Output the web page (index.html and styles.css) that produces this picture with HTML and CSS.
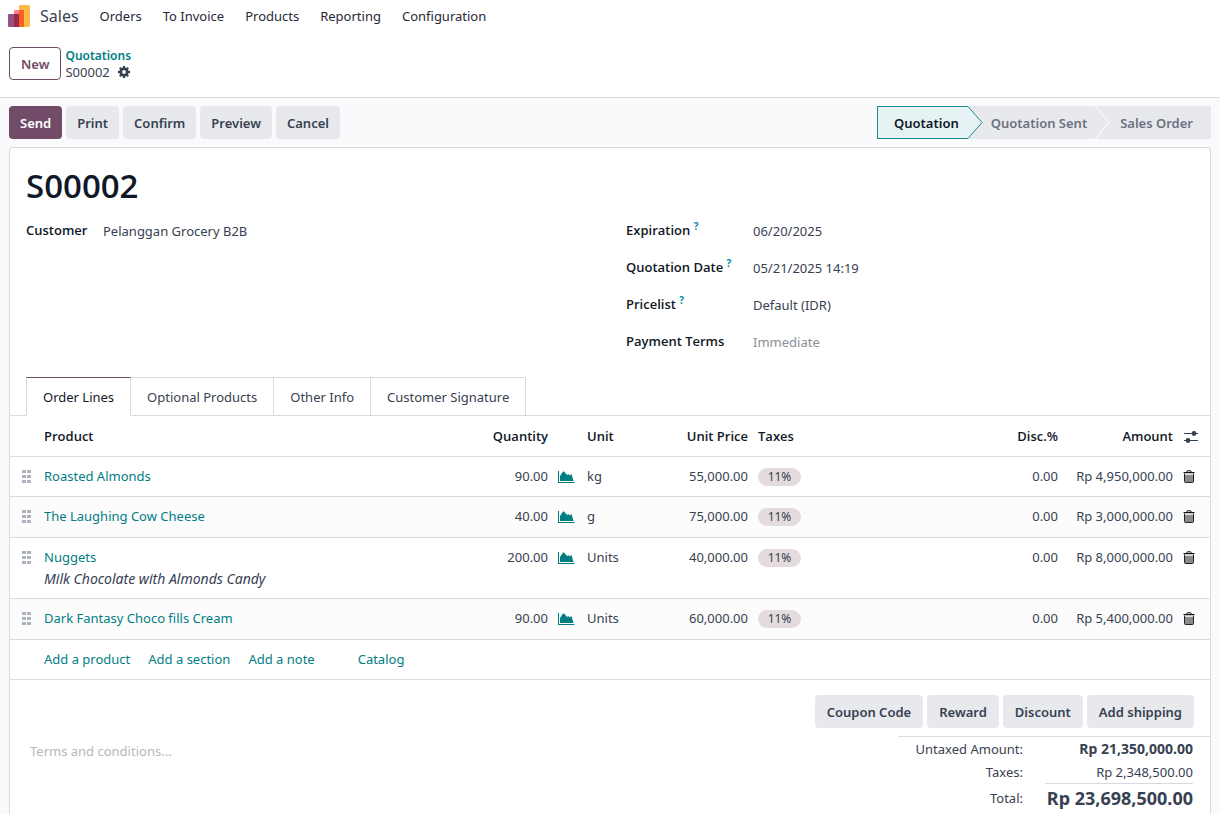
FILE: index.html
```html
<!DOCTYPE html>
<html lang="en">
<head>
<meta charset="UTF-8" />
<meta name="viewport" content="width=device-width, initial-scale=1" />
<title>S00002 - Sales</title>
<link rel="stylesheet" href="styles.css">
</head>
<body>

  <!-- shared icons -->
  <svg class="sprite" aria-hidden="true">
    <symbol id="i-chart" viewBox="0 0 17 14">
      <path d="M0 1h1v11h15.500v1H0z" />
      <path d="M2 11V6l3-4.500h1L9 5l1.500-1 1 1.500L13.500 4l2 7z" />
    </symbol>
    <symbol id="i-trash" viewBox="0 0 12 13">
      <path d="M3.500 2.500l.8-1.700h3.400l.8 1.700" fill="none" stroke="#111" />
      <path d="M.5 2.500h11" stroke="#111" />
      <path d="M1.500 3.500v8q0 1 1 1h7q1 0 1-1v-8" fill="#8a8a8a" stroke="#222" />
      <path d="M2 4.500h8" stroke="#e5e5e5" />
    </symbol>
    <symbol id="i-grip" viewBox="0 0 10 14">
      <path d="M0 1h4v3H0zM5 1h4v3H5zM0 6h4v3H0zM5 6h4v3H5zM0 11h4v3H0zM5 11h4v3H5z" />
    </symbol>
  </svg>

  <header class="header">
    <nav class="navbar">
      <a href="#" class="brand">
        <svg width="22" height="22" viewBox="0 0 22 22" aria-hidden="true">
          <rect x="11" y="0" width="11" height="22" rx="1" fill="#fbb945" />
          <rect x="6" y="5" width="10" height="17" rx="1" fill="#ff8086" />
          <rect x="11" y="5" width="5" height="17" fill="#f86126" />
          <rect x="0" y="9" width="11" height="13" rx="1" fill="#985184" />
          <rect x="6" y="9" width="5" height="13" fill="#9b2a48" />
        </svg>
        <span>Sales</span>
      </a>
      <a href="#">Orders</a>
      <a href="#">To Invoice</a>
      <a href="#">Products</a>
      <a href="#">Reporting</a>
      <a href="#">Configuration</a>
    </nav>
    <div class="control-panel">
      <button class="btn btn-outline">New</button>
      <div class="breadcrumb">
        <a href="#">Quotations</a>
        <div class="current">
          <span>S00002</span>
          <button class="icon-btn" aria-label="Actions">
            <svg width="12" height="12" viewBox="0 0 12 12" aria-hidden="true">
              <circle cx="6" cy="6" r="3.200" fill="none" stroke="#374151" stroke-width="2.600" />
              <path d="M6 0v2.500M6 9.500V12M0 6h2.500M9.500 6H12M1.800 1.800l1.700 1.700M8.500 8.500l1.700 1.700M1.800 10.200l1.700-1.700M8.500 3.500l1.700-1.700" stroke="#374151" stroke-width="2.300" />
            </svg>
          </button>
        </div>
      </div>
    </div>
  </header>

  <main class="form-view">
    <div class="statusbar">
      <div class="buttons">
        <button class="btn btn-primary">Send</button>
        <button class="btn">Print</button>
        <button class="btn">Confirm</button>
        <button class="btn">Preview</button>
        <button class="btn">Cancel</button>
      </div>
      <div class="stages">
        <button class="stage active">Quotation</button>
        <svg width="15" height="33" viewBox="0 0 15 33" aria-hidden="true">
          <path d="M0 .5L14 16.500 0 32.500" fill="#e6f2f3" stroke="#1a8c91" />
        </svg>
        <button class="stage">Quotation Sent</button>
        <svg width="15" height="33" viewBox="0 0 15 33" aria-hidden="true">
          <path d="M0 0L14 16.500 0 33" fill="none" stroke="#fff" />
        </svg>
        <button class="stage last">Sales Order</button>
      </div>
    </div>

    <div class="sheet">
      <h1>S00002</h1>

      <div class="groups">
        <div class="group">
          <div class="field short">
            <label for="customer">Customer</label>
            <input type="text" id="customer" value="Pelanggan Grocery B2B" />
          </div>
        </div>
        <div class="group">
          <div class="field">
            <label for="expiration">Expiration <sup>?</sup></label>
            <input type="text" id="expiration" value="06/20/2025" />
          </div>
          <div class="field">
            <label for="quotationDate">Quotation Date <sup>?</sup></label>
            <input type="text" id="quotationDate" value="05/21/2025 14:19" />
          </div>
          <div class="field">
            <label for="pricelist">Pricelist <sup>?</sup></label>
            <input type="text" id="pricelist" value="Default (IDR)" />
          </div>
          <div class="field">
            <label for="paymentTerms">Payment Terms</label>
            <input type="text" id="paymentTerms" placeholder="Immediate" />
          </div>
        </div>
      </div>

      <div class="tabs">
        <button class="tab active">Order Lines</button>
        <button class="tab">Optional Products</button>
        <button class="tab">Other Info</button>
        <button class="tab">Customer Signature</button>
      </div>

      <table class="lines">
        <colgroup>
          <col class="c-handle"><col><col class="c-qty"><col class="c-chart"><col class="c-unit">
          <col class="c-price"><col class="c-taxes"><col class="c-disc"><col class="c-amount"><col class="c-action">
        </colgroup>
        <thead>
          <tr>
            <th></th>
            <th>Product</th>
            <th class="num">Quantity</th>
            <th></th>
            <th>Unit</th>
            <th class="num">Unit Price</th>
            <th>Taxes</th>
            <th class="num">Disc.%</th>
            <th class="num">Amount</th>
            <th>
              <button class="icon-btn" aria-label="Optional columns">
                <svg width="16" height="14" viewBox="0 0 16 14" aria-hidden="true">
                  <path d="M1 3.500h14M1 10.500h14" stroke="#374151" stroke-width="1.200" />
                  <circle cx="11" cy="3.500" r="2.400" fill="#374151" />
                  <circle cx="5" cy="10.500" r="2.400" fill="#374151" />
                </svg>
              </button>
            </th>
          </tr>
        </thead>
        <tbody>
          <tr>
            <td><svg class="grip" aria-hidden="true"><use href="#i-grip" /></svg></td>
            <td><a href="#">Roasted Almonds</a></td>
            <td class="num">90.00</td>
            <td><button class="icon-btn" aria-label="Forecast"><svg class="chart"><use href="#i-chart" /></svg></button></td>
            <td>kg</td>
            <td class="num">55,000.00</td>
            <td><span class="tag">11%</span></td>
            <td class="num">0.00</td>
            <td class="num">Rp 4,950,000.00</td>
            <td><button class="icon-btn" aria-label="Delete row"><svg class="trash"><use href="#i-trash" /></svg></button></td>
          </tr>
          <tr>
            <td><svg class="grip" aria-hidden="true"><use href="#i-grip" /></svg></td>
            <td><a href="#">The Laughing Cow Cheese</a></td>
            <td class="num">40.00</td>
            <td><button class="icon-btn" aria-label="Forecast"><svg class="chart"><use href="#i-chart" /></svg></button></td>
            <td>g</td>
            <td class="num">75,000.00</td>
            <td><span class="tag">11%</span></td>
            <td class="num">0.00</td>
            <td class="num">Rp 3,000,000.00</td>
            <td><button class="icon-btn" aria-label="Delete row"><svg class="trash"><use href="#i-trash" /></svg></button></td>
          </tr>
          <tr>
            <td><svg class="grip" aria-hidden="true"><use href="#i-grip" /></svg></td>
            <td><a href="#">Nuggets</a><div class="description">Milk Chocolate with Almonds Candy</div></td>
            <td class="num">200.00</td>
            <td><button class="icon-btn" aria-label="Forecast"><svg class="chart"><use href="#i-chart" /></svg></button></td>
            <td>Units</td>
            <td class="num">40,000.00</td>
            <td><span class="tag">11%</span></td>
            <td class="num">0.00</td>
            <td class="num">Rp 8,000,000.00</td>
            <td><button class="icon-btn" aria-label="Delete row"><svg class="trash"><use href="#i-trash" /></svg></button></td>
          </tr>
          <tr>
            <td><svg class="grip" aria-hidden="true"><use href="#i-grip" /></svg></td>
            <td><a href="#">Dark Fantasy Choco fills Cream</a></td>
            <td class="num">90.00</td>
            <td><button class="icon-btn" aria-label="Forecast"><svg class="chart"><use href="#i-chart" /></svg></button></td>
            <td>Units</td>
            <td class="num">60,000.00</td>
            <td><span class="tag">11%</span></td>
            <td class="num">0.00</td>
            <td class="num">Rp 5,400,000.00</td>
            <td><button class="icon-btn" aria-label="Delete row"><svg class="trash"><use href="#i-trash" /></svg></button></td>
          </tr>
          <tr>
            <td></td>
            <td colspan="9">
              <div class="add-links">
                <a href="#">Add a product</a>
                <a href="#">Add a section</a>
                <a href="#">Add a note</a>
                <a href="#" class="catalog">Catalog</a>
              </div>
            </td>
          </tr>
        </tbody>
      </table>

      <div class="promo">
        <button class="btn">Coupon Code</button>
        <button class="btn">Reward</button>
        <button class="btn">Discount</button>
        <button class="btn">Add shipping</button>
      </div>

      <div class="bottom">
        <textarea class="terms" rows="1" aria-label="Terms and conditions" placeholder="Terms and conditions..."></textarea>
        <table class="totals">
          <tr>
            <th>Untaxed Amount:</th>
            <td><b>Rp 21,350,000.00</b></td>
          </tr>
          <tr>
            <th>Taxes:</th>
            <td>Rp 2,348,500.00</td>
          </tr>
          <tr>
            <th>Total:</th>
            <td><b class="grand">Rp 23,698,500.00</b></td>
          </tr>
        </table>
      </div>
    </div>
  </main>

</body>
</html>
```
FILE: styles.css
```css
* {
  box-sizing: border-box;
}
body {
  margin: 0;
  min-height: 100vh;
  display: flex;
  flex-direction: column;
  font-family: "Noto Sans", "Open Sans", sans-serif;
  font-size: 13px;
  line-height: 20px;
  color: #374151;
  background: #f9fafb;
}
a {
  color: #017e84;
  text-decoration: none;
}
button,
input,
textarea {
  font: inherit;
  color: inherit;
}
button {
  cursor: pointer;
}
svg {
  display: block;
}
.sprite {
  display: none;
}

/* header */
.header {
  background: #fff;
  border-bottom: 1px solid #d8dadd;
}
.navbar {
  display: flex;
  align-items: center;
  gap: 21px;
  height: 32px;
  padding: 0 8px;
}
.navbar a {
  color: #1f2937;
}
.navbar .brand {
  display: flex;
  align-items: center;
  gap: 10px;
  font-size: 16px;
  color: #374151;
}
.control-panel {
  display: flex;
  align-items: center;
  gap: 4px;
  height: 65px;
  padding: 0 9px 2px;
}
.breadcrumb {
  line-height: 17px;
}
.breadcrumb a {
  font-weight: 600;
  font-size: 12px;
}
.current {
  display: flex;
  align-items: center;
  gap: 8px;
}

/* buttons */
.btn {
  height: 33px;
  padding: 0 11px;
  border: 0;
  border-radius: 4px;
  font-weight: 600;
  background: #e7e9ed;
}
.btn-outline {
  border: 1px solid #714b67;
  background: #fff;
  color: #714b67;
}
.btn-primary {
  background: #714b67;
  color: #fff;
}
.icon-btn {
  display: block;
  padding: 0;
  border: 0;
  background: none;
}

/* status bar */
.form-view {
  flex: 1;
  display: flex;
  flex-direction: column;
  padding: 8px 9px 0;
}
.statusbar {
  display: flex;
  justify-content: space-between;
  margin-bottom: 8px;
}
.buttons {
  display: flex;
  gap: 4px;
}
.stages {
  display: flex;
  background: #e7e9ed;
}
.stage {
  height: 33px;
  padding: 0 8px;
  border: 0;
  font-weight: 600;
  color: #6b7280;
  background: none;
}
.stage.active {
  padding: 0 9px 0 16px;
  border: 1px solid #1a8c91;
  border-right: 0;
  color: #111827;
  background: #e6f2f3;
}
.stage.last {
  padding: 0 18px 0 10px;
}

/* sheet */
.sheet {
  flex: 1;
  border: 1px solid #d8dadd;
  border-bottom: 0;
  border-radius: 4px 4px 0 0;
  background: #fff;
}
h1 {
  margin: 17px 16px 13px;
  font-family: "Open Sans", sans-serif;
  font-size: 33px;
  line-height: 42px;
  font-weight: 600;
  color: #111827;
}
.groups {
  display: grid;
  grid-template-columns: 1fr 1fr;
  gap: 32px;
  padding: 0 16px;
  margin-bottom: 9px;
}
.field {
  display: flex;
  height: 37px;
}
.field label {
  width: 127px;
  font-family: "Open Sans", sans-serif;
  font-weight: 600;
  color: #111827;
}
.field.short label {
  width: 77px;
}
.field input {
  flex: 1;
  height: 22px;
  padding: 0;
  border: 0;
  background: none;
}
.field input::placeholder {
  color: #8b8f97;
}
sup {
  font-size: 10px;
  line-height: 0;
  font-weight: 700;
  color: #008da6;
}

/* tabs */
.tabs {
  display: flex;
  padding: 0 16px;
  box-shadow: inset 0 -1px #d8dadd;
}
.tab {
  height: 39px;
  padding: 0 16px;
  border: 1px solid #d8dadd;
  border-left: 0;
  background: none;
}
.tab.active {
  border-left: 1px solid #d8dadd;
  border-top-color: #714b67;
  border-bottom-color: #fff;
  color: #111827;
}

/* order lines */
.lines {
  width: 100%;
  table-layout: fixed;
  border-spacing: 0;
  line-height: 21px;
}
.c-handle,
.c-chart {
  width: 29px;
}
.c-qty {
  width: 73px;
}
.c-unit,
.c-disc {
  width: 90px;
}
.c-price {
  width: 81px;
}
.c-taxes {
  width: 220px;
}
.c-amount {
  width: 115px;
}
.c-action {
  width: 32px;
}
.lines th,
.lines td {
  padding: 9px 5px;
  border-bottom: 1px solid #d8dadd;
  text-align: left;
  vertical-align: top;
  white-space: nowrap;
}
.lines th {
  padding-top: 10px;
  font-family: "Open Sans", sans-serif;
  font-weight: 600;
  color: #111827;
}
.lines tbody tr:nth-child(even) td {
  padding-bottom: 10px;
  background: #fcfcfc;
}
.lines .num {
  text-align: right;
}
.lines svg {
  margin: 4px 0 3px;
}
.lines .grip {
  width: 10px;
  height: 14px;
  margin: 3px 0 3px 7px;
  fill: #adb3bd;
}
.chart {
  width: 17px;
  height: 14px;
  fill: #017e84;
}
.trash {
  width: 12px;
  height: 13px;
}
.description {
  font-size: 14px;
  font-style: italic;
}
.tag {
  display: block;
  width: 43px;
  height: 18px;
  margin-top: 2px;
  border-radius: 9px;
  font-size: 12px;
  line-height: 18px;
  text-align: center;
  background: #e4dcdc;
}
.add-links {
  display: flex;
  gap: 18px;
}
.catalog {
  margin-left: 25px;
}

/* footer */
.promo {
  display: flex;
  justify-content: flex-end;
  gap: 4px;
  padding: 15px 16px 8px;
}
.promo .btn {
  padding: 0 12px;
}
.bottom {
  display: flex;
  justify-content: space-between;
  align-items: flex-start;
}
.terms {
  width: 50%;
  height: 30px;
  margin-left: 16px;
  padding: 5px 4px;
  border: 0;
  resize: none;
  background: none;
}
.terms::placeholder {
  color: #b5b8be;
}
.totals {
  width: 26%;
  padding-right: 17px;
  border-top: 1px solid #d8dadd;
  border-spacing: 0;
}
.totals th {
  padding: 2px 22px 1px 0;
  font-weight: 400;
  text-align: right;
}
.totals td {
  width: 148px;
  padding: 2px 0 1px;
  text-align: right;
  white-space: nowrap;
}
.totals tr:last-child td {
  border-top: 1px solid #d8dadd;
}
.totals b {
  font-size: 14px;
}
.totals .grand {
  font-size: 18px;
  line-height: 24px;
}
```
